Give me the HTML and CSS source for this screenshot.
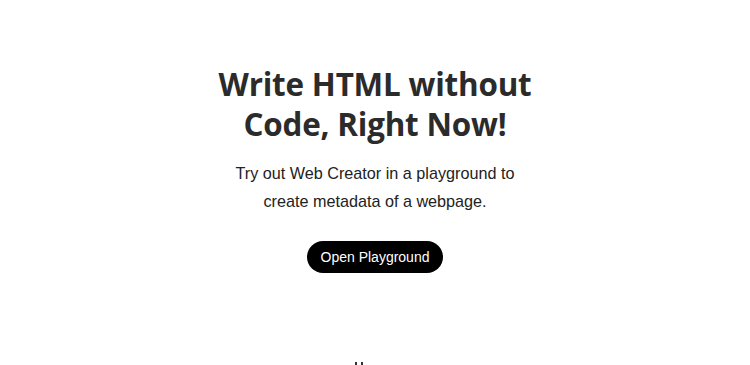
FILE: index.html
```html
<!DOCTYPE html>
<html>
<head>
<meta charset="utf-8">
<link rel="stylesheet" href="styles.css">
</head>
<body>
<main class="hero">
  <h1 class="title">Write HTML without<br>Code, Right Now!</h1>
  <p class="lead">Try out Web Creator in a playground to<br>create metadata of a webpage.</p>
  <button class="cta">Open Playground</button>
  <div class="dots"><span></span><span></span></div>
</main>
</body>
</html>
```
FILE: styles.css
```css
html, body { margin: 0; padding: 0; background: #fff; }
body { width: 750px; height: 365px; overflow: hidden; }
.hero {
  display: flex;
  flex-direction: column;
  align-items: center;
  padding-top: 64px;
}
.title {
  margin: 0;
  font-family: "Open Sans", sans-serif;
  font-weight: 700;
  font-size: 31.4px;
  line-height: 40px;
  color: #2b2b2b;
  text-align: center;
  letter-spacing: -0.2px;
}
.lead {
  margin: 15px 0 0;
  font-family: "Liberation Sans", Arial, sans-serif;
  font-size: 16.2px;
  line-height: 28px;
  color: #222;
  text-align: center;
}
.cta {
  margin-top: 26px;
  height: 32px;
  padding: 0;
  width: 136px;
  border: none;
  border-radius: 16px;
  background: #000;
  color: #fff;
  font-family: "Liberation Sans", Arial, sans-serif;
  font-size: 14px;
  white-space: nowrap;
}
.dots {
  margin-top: 89px;
  margin-right: 32px;
  display: flex;
  gap: 4px;
}
.dots span { width: 2px; height: 3px; background: #333; }
```
